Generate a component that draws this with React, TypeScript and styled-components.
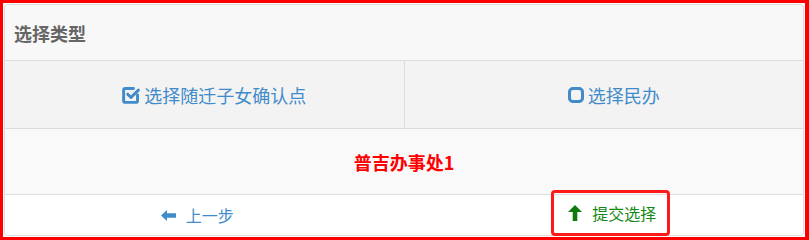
import React from 'react';
import styled, { createGlobalStyle } from 'styled-components';

const GlobalStyle = createGlobalStyle`
  html, body {
    margin: 0;
    padding: 0;
    background: #fff;
  }
  body {
    font-family: "Noto Sans CJK SC", "Liberation Sans", sans-serif;
  }
`;

// outer red highlight frame
const Frame = styled.div`
  width: 809px;
  height: 240px;
  box-sizing: border-box;
  border: solid #ff0000;
  border-width: 3px 4px 3px 3px;
  padding: 1px;
`;

const Panel = styled.div`
  height: 100%;
  box-sizing: border-box;
  border: 1px solid #ddd;
  border-radius: 4px;
  display: flex;
  flex-direction: column;
`;

const Heading = styled.div`
  height: 55px;
  display: flex;
  align-items: center;
  padding-left: 9px;
  background: #f8f8f8;
  border-bottom: 1px solid #ddd;
  border-radius: 3px 3px 0 0;
  color: #666;
  font-size: 18px;
  font-weight: bold;
`;

const OptionRow = styled.div`
  display: flex;
  height: 67px;
  background: #f3f3f3;
  border-bottom: 1px solid #ddd;
`;

const Option = styled.label`
  flex: 1;
  display: flex;
  align-items: center;
  justify-content: center;
  gap: 4px;
  padding-left: 20px;
  color: #428bca;
  font-size: 18px;
  cursor: pointer;
  & + & {
    border-left: 1px solid #ddd;
  }
`;

const OfficeRow = styled.div`
  height: 65px;
  display: flex;
  align-items: center;
  justify-content: center;
  background: #f9f9f9;
  border-bottom: 1px solid #ddd;
  color: #ff0000;
  font-size: 18px;
  font-weight: bold;
`;

const Footer = styled.div`
  height: 40px;
  display: flex;
  background: #fff;
  border-radius: 0 0 3px 3px;
`;

const FooterCell = styled.div<{ $shift: number }>`
  flex: 1;
  display: flex;
  align-items: center;
  justify-content: center;
  padding-left: ${p => (p.$shift > 0 ? p.$shift : 0)}px;
  padding-right: ${p => (p.$shift < 0 ? -p.$shift : 0)}px;
`;

const StepButton = styled.a<{ $color: string; $marked?: boolean }>`
  display: flex;
  align-items: center;
  gap: 10px;
  color: ${p => p.$color};
  font-size: 16px;
  text-decoration: none;
  cursor: pointer;
  box-sizing: border-box;
  ${p =>
    p.$marked &&
    `
    height: 46px;
    margin-bottom: 4px;
    padding: 0 11px 0 14px;
    border: 3px solid #ff1a1a;
    border-radius: 4px;
  `}
`;

const CheckSquareIcon = () => (
  <svg width="18" height="18" viewBox="1 1 22 22" fill="none" stroke="#428bca" strokeWidth="3.6" strokeLinecap="round" strokeLinejoin="round">
    <path d="M20 12v7a2 2 0 0 1-2 2H5a2 2 0 0 1-2-2V6a2 2 0 0 1 2-2h10" />
    <path d="M8 11l4 4 9-9" />
  </svg>
);

const SquareIcon = () => (
  <svg width="16" height="16" viewBox="1 1 22 22" fill="none" stroke="#428bca" strokeWidth="4.2">
    <rect x="3" y="3" width="18" height="18" rx="5" />
  </svg>
);

const ArrowLeft = () => (
  <svg width="15" height="11" viewBox="0 0 15 11">
    <polygon points="0,5.5 6,0 6,3.2 15,3.2 15,7.8 6,7.8 6,11" fill="#428bca" />
  </svg>
);

const ArrowUp = () => (
  <svg width="14" height="16" viewBox="0 0 14 16">
    <polygon points="7,0 14,7 9.3,7 9.3,16 4.7,16 4.7,7 0,7" fill="#0e7a0e" />
  </svg>
);

export default function App() {
  return (
    <>
      <GlobalStyle />
      <Frame>
        <Panel>
          <Heading>选择类型</Heading>
          <OptionRow>
            <Option>
              <CheckSquareIcon />
              选择随迁子女确认点
            </Option>
            <Option>
              <SquareIcon />
              选择民办
            </Option>
          </OptionRow>
          <OfficeRow>普吉办事处1</OfficeRow>
          <Footer>
            <FooterCell $shift={-11}>
              <StepButton $color="#428bca">
                <ArrowLeft />
                上一步
              </StepButton>
            </FooterCell>
            <FooterCell $shift={18}>
              <StepButton $color="#138a13" $marked>
                <ArrowUp />
                提交选择
              </StepButton>
            </FooterCell>
          </Footer>
        </Panel>
      </Frame>
    </>
  );
}
